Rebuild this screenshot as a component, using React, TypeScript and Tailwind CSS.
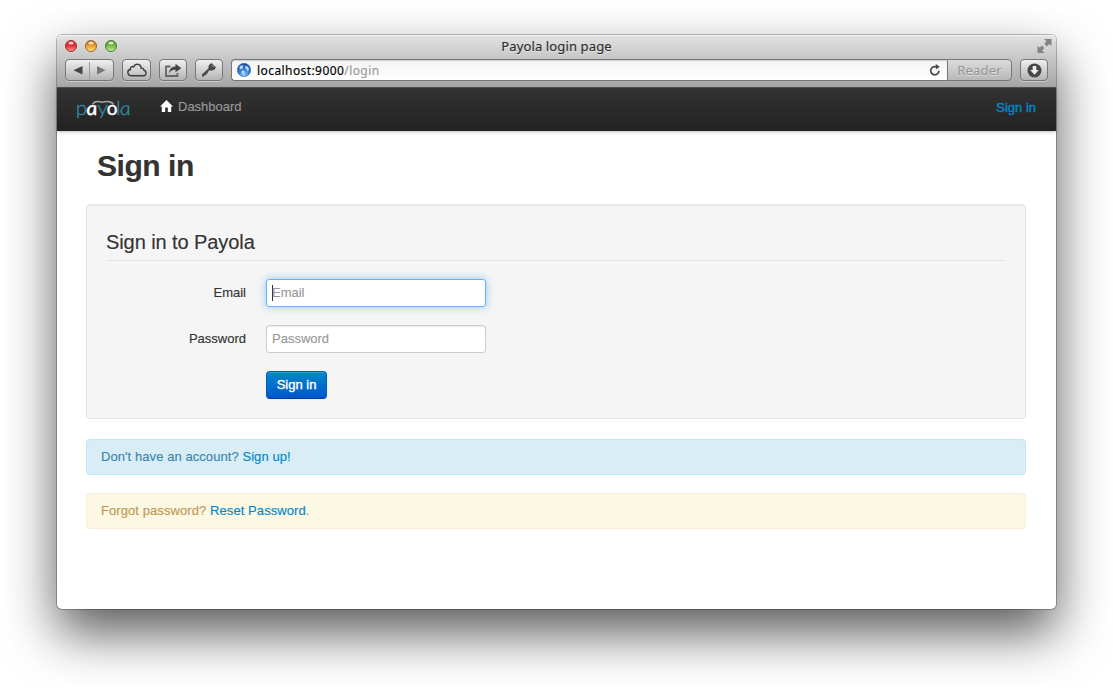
import React from "react";

const helv = "font-['Liberation_Sans',sans-serif]";
const tool =
  "flex h-[22px] items-center justify-center rounded-[4px] border border-[#777] bg-linear-to-b from-[#f0f0f0] to-[#b4b4b4] shadow-[0_1px_0_rgba(255,255,255,0.35)]";

function Light({ id, edge, mid, low }: { id: string; edge: string; mid: string; low: string }) {
  return (
    <svg width="12" height="12" viewBox="0 0 12 12">
      <defs>
        <linearGradient id={id} x1="0" y1="0" x2="0" y2="1">
          <stop offset="0" stopColor={edge} />
          <stop offset="0.5" stopColor={mid} />
          <stop offset="1" stopColor={low} />
        </linearGradient>
      </defs>
      <circle cx="6" cy="6" r="5.5" fill={`url(#${id})`} stroke={edge} strokeWidth="1" />
      <ellipse cx="6" cy="3.1" rx="2.7" ry="1.5" fill="#fff" opacity="0.75" />
    </svg>
  );
}

function Logo() {
  return (
    <svg width="58" height="36" viewBox="0 0 58 36" fontFamily="Lato, sans-serif" fontSize="19">
      <g fill="#2f8fae" stroke="#2f8fae" strokeWidth="0.3" fontWeight="300">
        <text transform="translate(-1.2 23) scale(1.08 1)" x="0" y="0">p</text>
        <text transform="translate(20.2 23) scale(1.12 1)" x="0" y="0">y</text>
        <text x="39.2" y="23">l</text>
        <text transform="translate(43.6 23) skewX(8) scale(1.16 1)" x="0" y="0" fontStyle="italic">a</text>
      </g>
      <g fill="#fff" stroke="#fff" strokeWidth="0.4" fontWeight="400">
        <text transform="translate(10 23) skewX(8) scale(1.14 1)" x="0" y="0" fontStyle="italic">a</text>
        <text x="29.8" y="23">o</text>
      </g>
      <path d="M15.5 12.5C17 9.5 21 9 25.5 10.3 30 9 34.5 9.5 36.5 12.5" fill="none" stroke="#a5a5a5" strokeWidth="1.5" />
    </svg>
  );
}

function Chrome() {
  return (
    <div className="flex h-[53px] flex-col rounded-t-[5px] border-b border-[#515151] bg-linear-to-b from-[#e3e3e3] to-[#a5a5a5] shadow-[inset_0_1px_0_#f5f5f5]">
      <div className="grid h-[24px] grid-cols-3 font-['Noto_Sans',sans-serif]">
        <div className="flex gap-2 pl-2 pt-[5px]">
          <Light id="lr" edge="#a62a2d" mid="#e5343a" low="#ff9c98" />
          <Light id="ly" edge="#a5631c" mid="#eda030" low="#ffe78a" />
          <Light id="lg" edge="#45802a" mid="#78bd46" low="#ccf49a" />
        </div>
        <div className="text-center text-[13px] leading-[22px] tracking-[0.13px] text-[#2c2c2c] [text-shadow:0_1px_0_rgba(255,255,255,0.5)]">Payola login page</div>
        <div className="flex justify-end pr-[4px] pt-1">
          <svg width="15" height="14" viewBox="0 0 15 14" fill="#858585">
            <path d="M7 0H14.5V7L12.4 5 9.8 7.4 7.4 5 9.4 2.2ZM0.5 6.8L2.6 8.8 5 6.6 7.4 9 5.2 11.6 7.6 14H0.5Z" />
          </svg>
        </div>
      </div>
      <div className="flex h-[22px] pl-2 pr-2">
        <div className={`${tool} w-[49px]`}>
          <svg width="47" height="20" viewBox="0 0 47 20">
            <path d="M7.5 10.3L16.5 6V14.6Z" fill="#454545" />
            <path d="M39.5 10.3L31 6V14.6Z" fill="#777" />
            <path d="M23.5 2V19" stroke="#999" />
          </svg>
        </div>
        <div className={`${tool} ml-2 w-[29px]`}>
          <svg width="20" height="14" viewBox="0 0 20 14" fill="none" stroke="#3d3d3d" strokeWidth="1.4">
            <path d="M5 12.8C-.2 12.8-.2 7 3.4 6.5 3 3.7 5.6 3 6.8 3.8 8.3-.3 14.4 1 14.2 5.2 15.6 4.8 17 5.7 16.9 7.3 20 8 19.8 12.8 16 12.8Z" />
          </svg>
        </div>
        <div className={`${tool} ml-2 w-[28px]`}>
          <svg width="18" height="15" viewBox="0 0 18 15">
            <path d="M6.5 3.5H2V13H13.5V10" fill="none" stroke="#666" strokeWidth="1.8" />
            <path d="M5 10.5C5.2 5.7 8 3.5 11.5 3.5V.8L17.3 5.2 11.5 9.3V6.8C8.5 6.6 6.5 7.8 5 10.5Z" fill="#444" />
          </svg>
        </div>
        <div className={`${tool} ml-2 w-[28px]`}>
          <svg width="16" height="16" viewBox="0 0 16 16">
            <path d="M8.2 2.7L10.5 1 15 5.5 13.3 7.8 10 8.8 8.6 8.2 6.8 10V11.5H5.3V13H3.8L3 14.5H1V12.5L7.8 6 7.2 5.2Z" fill="#484848" />
            <path d="M11 3.3L12.8 5.1" stroke="#bbb" />
          </svg>
        </div>
        <div className="ml-2 flex w-[716px] items-center rounded-l-[4px] border border-r-0 border-[#777] bg-linear-to-b from-[#f3f3f3] to-white pl-[5px] shadow-[inset_0_1px_1px_rgba(0,0,0,0.15)]">
          <svg width="14" height="14" viewBox="0 0 14 14">
            <defs>
              <radialGradient id="globe" cx=".5" cy=".85" r=".85">
                <stop offset="0" stopColor="#8dd0fa" />
                <stop offset=".5" stopColor="#2f7cd6" />
                <stop offset="1" stopColor="#1a4797" />
              </radialGradient>
            </defs>
            <circle cx="7" cy="7" r="6.7" fill="url(#globe)" stroke="#2552a0" strokeWidth=".5" />
            <path d="M2.6 3.4L5 2.2 6.6 2.8 5.6 4.3 6 5.4 4.2 5.8 2.8 6.6ZM5 7.2L7.4 8.2 6.8 10.4 5.6 11.6 5 9.4ZM8.6 2.6L11.2 4 12 6.6 10.8 8.4 9.6 6.6 8.2 5Z" fill="#d9efff" opacity=".85" />
          </svg>
          <span className="ml-[6px] mt-px flex-1 font-['Noto_Sans',sans-serif] text-[12px] leading-5 tracking-[0.42px] text-black">
            localhost:9000<span className="text-[#999]">/login</span>
          </span>
          <svg className="mr-[6px]" width="12" height="12" viewBox="0 0 12 12">
            <path d="M9.9 6.7A4.1 4.1 0 1 1 6.2 2.6H8" fill="none" stroke="#484848" strokeWidth="1.7" />
            <path d="M6.8 0L10.8 2.8 6.8 5.6Z" fill="#484848" />
          </svg>
        </div>
        <div className="flex w-[65px] items-center justify-center rounded-r-[4px] border border-[#777] bg-linear-to-b from-[#dcdcdc] to-[#b8b8b8] font-['Noto_Sans',sans-serif] text-[13px] leading-5 tracking-[0.15px] text-[#949494] [-webkit-text-stroke:0px] [text-shadow:0_1px_0_rgba(255,255,255,0.5)]">
          Reader
        </div>
        <div className={`${tool} ml-2 w-[28px]`}>
          <svg width="15" height="15" viewBox="0 0 15 15">
            <circle cx="7.5" cy="7.5" r="7" fill="#484848" />
            <path d="M5.7 3H9.3V7H11.8L7.5 11.8 3.2 7H5.7Z" fill="#eee" />
          </svg>
        </div>
      </div>
    </div>
  );
}

function Field({ label, focused }: { label: string; focused?: boolean }) {
  return (
    <div className="mb-[18px] flex h-7 items-center">
      <div className="w-[140px] text-right">{label}</div>
      <div
        className={
          focused
            ? "ml-5 flex h-7 w-[220px] items-center rounded-[3px] border border-[#6cb3ee] bg-white pl-[5px] text-[#999] shadow-[0_0_8px_rgba(82,168,236,0.6)]"
            : "ml-5 flex h-7 w-[220px] items-center rounded-[3px] border border-[#ccc] bg-white pl-[5px] text-[#999] shadow-[inset_0_1px_1px_rgba(0,0,0,0.075)]"
        }
      >
        {focused && <span className="-mr-px h-4 w-px bg-[#333]" />}
        {label}
      </div>
    </div>
  );
}

export default function App() {
  return (
    <div className="h-[688px] w-[1113px] overflow-hidden bg-white pl-[57px] pt-[35px]">
      <div className={`${helv} h-[574px] w-[999px] rounded-[5px] bg-white text-[13px] leading-[18px] text-[#333] shadow-[0_0_0_1px_rgba(0,0,0,0.25),0_24px_52px_rgba(0,0,0,0.65)] [-webkit-text-stroke:0.15px]`}>
        <Chrome />
        <nav className="flex h-[43px] items-start bg-linear-to-b from-[#333] to-[#222] shadow-[0_1px_3px_rgba(0,0,0,0.25)]">
          <div className="ml-[20px] mt-1"><Logo /></div>
          <svg className="ml-[25px] mt-3" width="13" height="12" viewBox="0 0 13 12" fill="#fff">
            <path d="M6.5 0L13 6.5H11.2V12H7.8V7.6H5.2V12H1.8V6.5H0Z" />
          </svg>
          <span className="ml-[5px] mt-[10px] text-[#999]">Dashboard</span>
          <span className="ml-auto mr-5 mt-[11px] text-[#0088cc] [-webkit-text-stroke:0.4px]">Sign in</span>
        </nav>
        <main className="pl-[29px] pr-[30px]">
          <h1 className="pl-[11px] pt-[17px] text-[30px] font-bold leading-9 tracking-[-0.45px]">Sign in</h1>
          <section className="mt-5 h-[215px] rounded-[4px] border border-[#e5e5e5] bg-[#f5f5f5] px-[19px] pt-[19px] shadow-[inset_0_1px_1px_rgba(0,0,0,0.05)]">
            <h2 className="mb-[18px] h-[37px] border-b border-[#e3e3e3] text-[20px] leading-9 tracking-[-0.08px]">Sign in to Payola</h2>
            <Field label="Email" focused />
            <Field label="Password" />
            <button className="ml-[160px] block h-7 w-[61px] rounded-[4px] border border-[#0060b5] border-b-[#003f99] bg-linear-to-b from-[#0088cc] to-[#0055cc] text-white shadow-[inset_0_1px_0_rgba(255,255,255,0.2),0_1px_2px_rgba(0,0,0,0.05)] [-webkit-text-stroke:0.4px] [text-shadow:0_-1px_0_rgba(0,0,0,0.25)]">Sign in</button>
          </section>
          <p className="mt-5 h-9 rounded-[4px] border border-[#bce8f1] bg-[#d9edf7] pl-[14px] leading-[34px] tracking-[0.07px] text-[#3a87ad]">
            Don't have an account? <span className="text-[#0088cc]">Sign up!</span>
          </p>
          <p className="mt-[18px] h-9 rounded-[4px] border border-[#fbeed5] bg-[#fcf8e3] pl-[14px] leading-[34px] tracking-[0.08px] text-[#c09853]">
            Forgot password? <span className="text-[#0088cc]">Reset Password</span>.
          </p>
        </main>
      </div>
    </div>
  );
}
